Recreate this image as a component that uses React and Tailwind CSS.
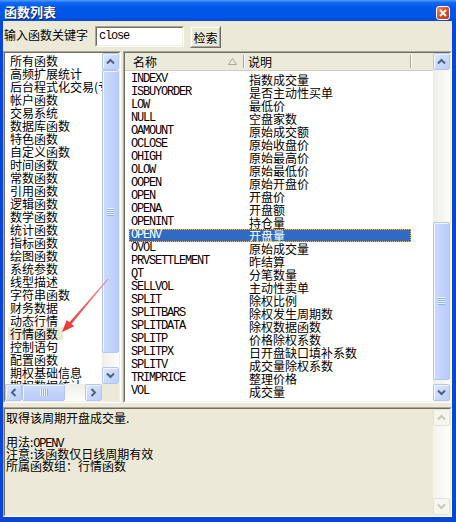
import React from "react";

const mono = "font-['Liberation_Mono',monospace] tracking-[-1.2px]";

const leftItems = [
  "所有函数", "高频扩展统计", "后台程式化交易(专业版)", "帐户函数", "交易系统", "数据库函数",
  "特色函数", "自定义函数", "时间函数", "常数函数", "引用函数", "逻辑函数", "数学函数",
  "统计函数", "指标函数", "绘图函数", "系统参数", "线型描述", "字符串函数", "财务数据",
  "动态行情", "行情函数", "控制语句", "配置函数", "期权基础信息", "期权数据统计",
];

const rows = [
  ["INDEXV", "指数成交量"], ["ISBUYORDER", "是否主动性买单"], ["LOW", "最低价"],
  ["NULL", "空盘家数"], ["OAMOUNT", "原始成交额"], ["OCLOSE", "原始收盘价"],
  ["OHIGH", "原始最高价"], ["OLOW", "原始最低价"], ["OOPEN", "原始开盘价"],
  ["OPEN", "开盘价"], ["OPENA", "开盘额"], ["OPENINT", "持仓量"], ["OPENV", "开盘量"],
  ["OVOL", "原始成交量"], ["PRVSETTLEMENT", "昨结算"], ["QT", "分笔数量"],
  ["SELLVOL", "主动性卖单"], ["SPLIT", "除权比例"], ["SPLITBARS", "除权发生周期数"],
  ["SPLITDATA", "除权数据函数"], ["SPLITP", "价格除权系数"], ["SPLITPX", "日开盘缺口填补系数"],
  ["SPLITV", "成交量除权系数"], ["TRIMPRICE", "整理价格"], ["VOL", "成交量"],
];

const arrowPaths = {
  up: "M1 6.5 L4.5 3 L8 6.5",
  down: "M1 2.5 L4.5 6 L8 2.5",
  left: "M6.5 1 L3 4.5 L6.5 8",
  right: "M2.5 1 L6 4.5 L2.5 8",
};

function ScrollBtn({ dir, disabled }) {
  return (
    <div
      className={`w-[17px] h-[17px] shrink-0 flex items-center justify-center rounded-[2px] border ${
        disabled
          ? "border-[#E4E2D8] bg-[#F6F5F0]"
          : "border-[#B3C6F2] bg-[linear-gradient(135deg,#DCE7FE_0%,#BACEFA_100%)] shadow-[inset_1px_1px_0_#F2F6FF]"
      }`}
    >
      <svg width="9" height="9" viewBox="0 0 9 9">
        <path d={arrowPaths[dir]} fill="none" stroke={disabled ? "#C9C7BA" : "#4D6185"} strokeWidth="2" />
      </svg>
    </div>
  );
}

function GripV() {
  return (
    <div className="flex flex-col items-center">
      {[0, 1, 2, 3].map((i) => (
        <React.Fragment key={i}>
          <div className="w-[7px] h-[1px] bg-[#EEF4FE]" />
          <div className="w-[7px] h-[1px] bg-[#8CB0F8]" />
        </React.Fragment>
      ))}
    </div>
  );
}

function GripH() {
  return (
    <div className="flex flex-row items-center">
      {[0, 1, 2, 3].map((i) => (
        <React.Fragment key={i}>
          <div className="w-[1px] h-[7px] bg-[#EEF4FE]" />
          <div className="w-[1px] h-[7px] bg-[#8CB0F8]" />
        </React.Fragment>
      ))}
    </div>
  );
}

function VScroll({ beforeCls, thumbCls }) {
  return (
    <div className="w-[17px] shrink-0 flex flex-col bg-[linear-gradient(to_right,#EEEDE5,#FDFDFB)]">
      <ScrollBtn dir="up" />
      {beforeCls && <div className={`${beforeCls} shrink-0`} />}
      <div className={`${thumbCls} shrink-0 rounded-[2px] border border-[#B3C6F2] bg-[linear-gradient(to_right,#CCDAFD,#B8CCF9)] shadow-[inset_1px_1px_0_#F2F6FF] flex items-center justify-center`}>
        <GripV />
      </div>
      <div className="flex-1" />
      <ScrollBtn dir="down" />
    </div>
  );
}

function VScrollDisabled() {
  return (
    <div className="w-[17px] shrink-0 flex flex-col bg-[linear-gradient(to_right,#F3F2EC,#FEFEFE)]">
      <ScrollBtn dir="up" disabled />
      <div className="flex-1" />
      <ScrollBtn dir="down" disabled />
    </div>
  );
}

function HScroll() {
  return (
    <div className="flex-1 min-w-0 h-[17px] flex bg-[linear-gradient(to_bottom,#EEEDE5,#FDFDFB)]">
      <ScrollBtn dir="left" />
      <div className="w-[43px] shrink-0 rounded-[2px] border border-[#B3C6F2] bg-[linear-gradient(to_bottom,#CCDAFD,#B8CCF9)] shadow-[inset_1px_1px_0_#F2F6FF] flex items-center justify-center">
        <GripH />
      </div>
      <div className="flex-1" />
      <ScrollBtn dir="right" />
    </div>
  );
}

function Sunken({ className = "", innerClassName = "", children }) {
  return (
    <div className={`flex border border-t-[#ACA899] border-l-[#ACA899] border-r-white border-b-white ${className}`}>
      <div className={`flex-1 min-w-0 min-h-0 flex border border-t-[#716F64] border-l-[#716F64] border-r-[#F1EFE2] border-b-[#F1EFE2] ${innerClassName}`}>
        {children}
      </div>
    </div>
  );
}

export default function App() {
  return (
    <div className="relative w-[456px] h-[522px] flex flex-col bg-[#0846D6] overflow-hidden font-['Noto_Sans_CJK_SC',sans-serif] text-[12px] text-black">
      {/* Title bar */}
      <div className="h-[21px] shrink-0 flex items-start justify-between bg-[linear-gradient(to_bottom,#4E9EFF_0%,#1469F3_12%,#0058E8_35%,#0055E5_80%,#004AD8_100%)]">
        <span className="ml-[4px] mt-[4px] leading-[16px] text-[13px] font-bold text-white [text-shadow:1px_1px_0_#0A246A]">
          函数列表
        </span>
        <div className="mr-[6px] mt-[6px] w-[14px] h-[14px] rounded-[3px] border border-white bg-[linear-gradient(135deg,#EE8A6C_0%,#D8512E_45%,#C2391A_100%)] flex items-center justify-center">
          <svg width="8" height="8" viewBox="0 0 8 8">
            <path d="M1 1 L7 7 M7 1 L1 7" stroke="white" strokeWidth="2" />
          </svg>
        </div>
      </div>

      {/* Frame */}
      <div className="flex-1 min-h-0 flex pl-[3px] pr-[4px] pb-[5px]">
        <div className="flex-1 min-w-0 flex flex-col bg-[#ECE9D8]">
          {/* Toolbar */}
          <div className="h-[30px] shrink-0 flex items-start pt-[5px] pl-[1px]">
            <span className="mt-[2px] leading-[13px] whitespace-nowrap">输入函数关键字</span>
            <Sunken className="ml-[7px] w-[89px] h-[21px]" innerClassName="bg-white items-center pl-[2px]">
              <span className={`${mono} leading-[13px]`}>close</span>
            </Sunken>
            <div className="ml-[6px] w-[31px] h-[22px] flex border border-t-[#F1EFE2] border-l-[#F1EFE2] border-r-[#716F64] border-b-[#716F64]">
              <div className="flex-1 flex items-center justify-center border border-t-white border-l-white border-r-[#ACA899] border-b-[#ACA899] leading-[13px]">
                检索
              </div>
            </div>
          </div>

          {/* Lists */}
          <div className="h-[352px] shrink-0 flex gap-[2px]">
            <Sunken className="w-[118px] shrink-0" innerClassName="flex-col">
              <div className="flex-1 min-h-0 flex">
                <div className="flex-1 min-w-0 bg-white overflow-hidden pt-[1px] pl-[3px]">
                  {leftItems.map((t) => (
                    <div key={t} className="h-[13px] leading-[13px] whitespace-nowrap">
                      <span className={`inline-block h-[13px] pl-[2px] ${t === "行情函数" ? "pr-[5px] bg-[#ECE9D8]" : ""}`}>
                        {t}
                      </span>
                    </div>
                  ))}
                </div>
                <VScroll thumbCls="h-[283px]" />
              </div>
              <div className="h-[17px] shrink-0 flex">
                <HScroll />
                <div className="w-[17px] shrink-0 bg-[#ECE9D8]" />
              </div>
            </Sunken>

            <Sunken className="flex-1 min-w-0">
              <div className="flex-1 min-w-0 bg-white flex flex-col overflow-hidden">
                <div className="h-[18px] shrink-0 flex bg-[#EBEADB] border-b border-[#D2CFBF]">
                  <div className="w-[120px] shrink-0 flex">
                    <div className="flex-1 flex items-center justify-between pl-[8px] pr-[6px] leading-[13px]">
                      <span>名称</span>
                      <svg width="9" height="7" viewBox="0 0 9 7">
                        <path d="M4.5 0.5 L8.5 6.5 L0.5 6.5 Z" fill="none" stroke="#ACA899" strokeWidth="1" />
                      </svg>
                    </div>
                    <div className="w-[2px] h-[13px] self-center border-l border-l-[#ACA899] border-r border-r-white" />
                  </div>
                  <div className="w-[167px] shrink-0 flex">
                    <div className="flex-1 flex items-center pl-[3px] leading-[13px]">
                      <span>说明</span>
                    </div>
                    <div className="w-[2px] h-[13px] self-center border-l border-l-[#ACA899] border-r border-r-white" />
                  </div>
                  <div className="flex-1" />
                </div>
                <div className="pt-[2px]">
                  {rows.map(([n, d]) => {
                    const sel = n === "OPENV";
                    return (
                      <div key={n} className="h-[13px] flex pl-[4px]">
                        <div
                          className={`w-[282px] flex leading-[13px] ${
                            sel ? "bg-[#316AC5] text-white outline-1 outline-dotted outline-[#E8B45C] -outline-offset-1" : ""
                          }`}
                        >
                          <span className={`w-[115px] shrink-0 pl-[2px] ${mono}`}>{n}</span>
                          <span className="pl-[5px] whitespace-nowrap">{d}</span>
                        </div>
                      </div>
                    );
                  })}
                </div>
              </div>
              <VScroll beforeCls="h-[152px]" thumbCls="h-[158px]" />
            </Sunken>
          </div>

          <div className="h-[4px] shrink-0" />

          {/* Description */}
          <Sunken className="flex-1 min-h-0">
            <div className="flex-1 min-w-0 pt-[3px] pl-[1px] leading-[12px] whitespace-nowrap">
              <div className="h-[12px]">取得该周期开盘成交量.</div>
              <div className="h-[12px]" />
              <div className="h-[12px]">
                用法:<span className={mono}>OPENV</span>
              </div>
              <div className="h-[12px]">注意:该函数仅日线周期有效</div>
              <div className="h-[12px]">所属函数组：行情函数</div>
            </div>
            <VScrollDisabled />
          </Sunken>
        </div>
      </div>

      {/* Red annotation arrow */}
      <svg className="absolute left-0 top-0 pointer-events-none" width="456" height="522" viewBox="0 0 456 522">
        <defs>
          <linearGradient id="ag" x1="108" y1="279" x2="62" y2="332" gradientUnits="userSpaceOnUse">
            <stop offset="0" stopColor="#F07070" stopOpacity="0.75" />
            <stop offset="1" stopColor="#E8302A" stopOpacity="1" />
          </linearGradient>
        </defs>
        <polygon
          points="108.4,279.35 71.5,324.0 74.2,326.3 62,332 66.7,319.9 69.4,322.2 107.6,278.65"
          fill="url(#ag)"
        />
      </svg>
    </div>
  );
}
